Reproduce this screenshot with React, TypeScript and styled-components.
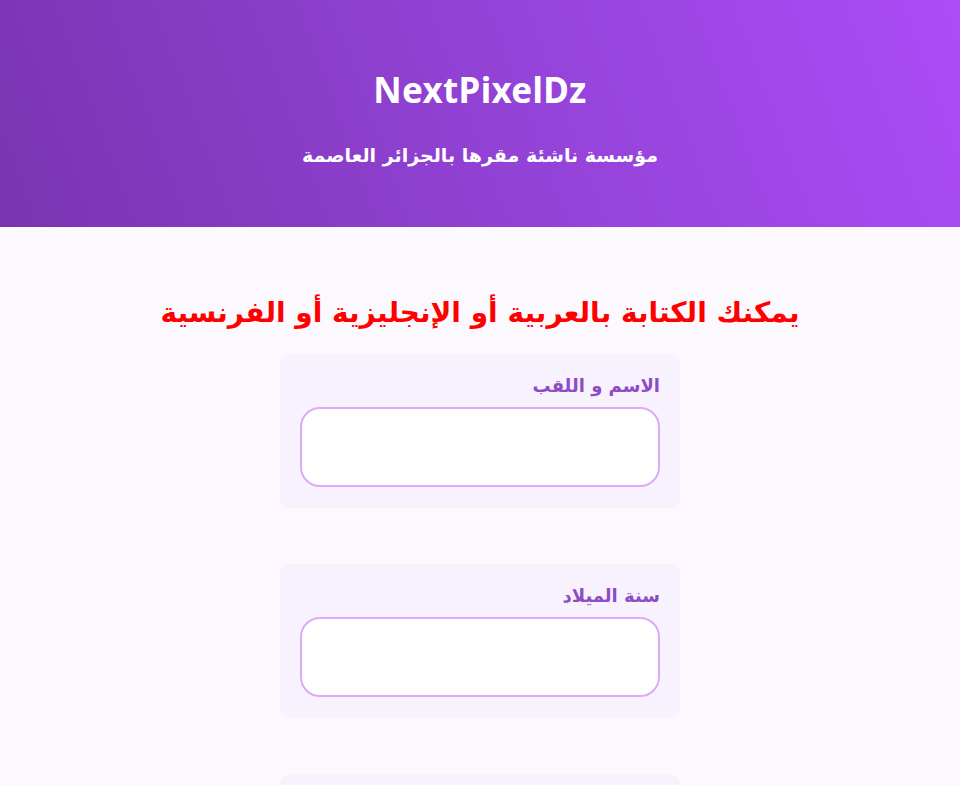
import React from "react";
import styled, { createGlobalStyle } from "styled-components";

const Global = createGlobalStyle`
  html, body { margin: 0; padding: 0; }
  body {
    background: #fcf9fe;
    font-family: "DejaVu Sans", "Noto Sans", sans-serif;
  }
`;

const Header = styled.header`
  height: 227px;
  box-sizing: border-box;
  padding-top: 66px;
  background: linear-gradient(70deg, #7a34b0 0%, #9443d8 55%, #ab4cf8 100%);
  color: #ffffff;
  text-align: center;
`;

const Title = styled.h1`
  margin: 0;
  font-family: "Noto Sans", "Open Sans", sans-serif;
  font-weight: 700;
  font-size: 35px;
  line-height: 48px;
  letter-spacing: 0.3px;
`;

const Subtitle = styled.p`
  margin: 28px 0 0;
  font-weight: 700;
  font-size: 19px;
  line-height: 26px;
  direction: rtl;
`;

const Main = styled.main`
  display: flex;
  flex-direction: column;
  align-items: center;
  padding-top: 66px;
  direction: rtl;
`;

const Notice = styled.h2`
  margin: 0 0 21px;
  color: #ff0000;
  font-weight: 700;
  font-size: 28px;
  line-height: 40px;
`;

const Form = styled.form`
  display: flex;
  flex-direction: column;
  gap: 56px;
  width: 400px;
`;

const Field = styled.div`
  background: #f8f1fe;
  border-radius: 10px;
  padding: 20px 20px 21px;
  display: flex;
  flex-direction: column;
  gap: 9px;
`;

const Label = styled.label`
  color: #8c4dc4;
  font-weight: 700;
  font-size: 18px;
  line-height: 24px;
  text-align: right;
`;

const Input = styled.input`
  box-sizing: border-box;
  height: 80px;
  width: 100%;
  border: 2px solid #dcaaf9;
  border-radius: 20px;
  background: #ffffff;
  outline: none;
  font-size: 16px;
  padding: 0 16px;
`;

const fields = ["الاسم و اللقب", "سنة الميلاد", "رقم الهاتف"];

export default function App() {
  return (
    <>
      <Global />
      <Header>
        <Title>NextPixelDz</Title>
        <Subtitle>مؤسسة ناشئة مقرها بالجزائر العاصمة</Subtitle>
      </Header>
      <Main>
        <Notice>يمكنك الكتابة بالعربية أو الإنجليزية أو الفرنسية</Notice>
        <Form>
          {fields.map((f) => (
            <Field key={f}>
              <Label>{f}</Label>
              <Input type="text" />
            </Field>
          ))}
        </Form>
      </Main>
    </>
  );
}
